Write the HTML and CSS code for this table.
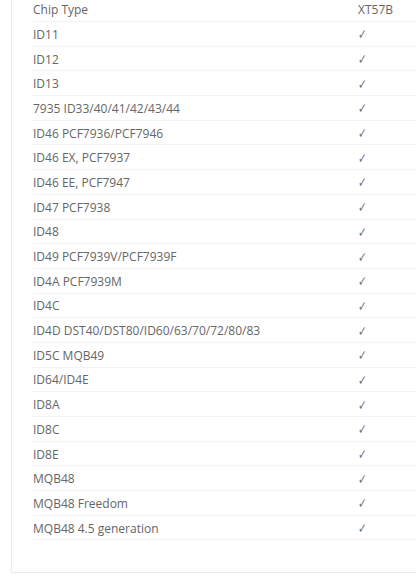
FILE: index.html
```html
<!DOCTYPE html>
<html lang="en">
<head>
    <meta charset="UTF-8">
    <meta name="viewport" content="width=device-width, initial-scale=1.0">
    <title>Chip Type Support</title>
    <link rel="stylesheet" href="styles.css">
</head>
<body>
    <div class="chip-card">
        <div class="chip-table">
            <div class="chip-row chip-head"><span>Chip Type</span><span>XT57B</span></div>
            <div class="chip-row"><span>ID11</span><span class="tick">✓</span></div>
            <div class="chip-row"><span>ID12</span><span class="tick">✓</span></div>
            <div class="chip-row"><span>ID13</span><span class="tick">✓</span></div>
            <div class="chip-row"><span>7935 ID33/40/41/42/43/44</span><span class="tick">✓</span></div>
            <div class="chip-row"><span>ID46 PCF7936/PCF7946</span><span class="tick">✓</span></div>
            <div class="chip-row"><span>ID46 EX, PCF7937</span><span class="tick">✓</span></div>
            <div class="chip-row"><span>ID46 EE, PCF7947</span><span class="tick">✓</span></div>
            <div class="chip-row"><span>ID47 PCF7938</span><span class="tick">✓</span></div>
            <div class="chip-row"><span>ID48</span><span class="tick">✓</span></div>
            <div class="chip-row"><span>ID49 PCF7939V/PCF7939F</span><span class="tick">✓</span></div>
            <div class="chip-row"><span>ID4A PCF7939M</span><span class="tick">✓</span></div>
            <div class="chip-row"><span>ID4C</span><span class="tick">✓</span></div>
            <div class="chip-row"><span>ID4D DST40/DST80/ID60/63/70/72/80/83</span><span class="tick">✓</span></div>
            <div class="chip-row"><span>ID5C MQB49</span><span class="tick">✓</span></div>
            <div class="chip-row"><span>ID64/ID4E</span><span class="tick">✓</span></div>
            <div class="chip-row"><span>ID8A</span><span class="tick">✓</span></div>
            <div class="chip-row"><span>ID8C</span><span class="tick">✓</span></div>
            <div class="chip-row"><span>ID8E</span><span class="tick">✓</span></div>
            <div class="chip-row"><span>MQB48</span><span class="tick">✓</span></div>
            <div class="chip-row"><span>MQB48 Freedom</span><span class="tick">✓</span></div>
            <div class="chip-row"><span>MQB48 4.5 generation</span><span class="tick">✓</span></div>
        </div>
    </div>
</body>
</html>
```

FILE: styles.css
```css
body {
    margin: 0;
    background: #fff;
    font-family: "Open Sans", "Liberation Sans", sans-serif;
    font-size: 12px;
    color: #666;
    overflow: hidden;
}
.chip-card {
    margin: -3px 0 0 11px;
    border-left: 1px solid #ebebeb;
    border-bottom: 1px solid #ebebeb;
    padding: 0 0 32px 21px;
}
.chip-row {
    display: grid;
    grid-template-columns: 325px 1fr;
    align-items: center;
    height: 24.7px;
    padding-top: 1px;
    box-sizing: border-box;
    border-bottom: 1px solid #f3f3f3;
    white-space: nowrap;
}
.chip-head {
    height: 25px;
}
.tick {
    justify-self: start;
    display: inline-block;
    font-family: "DejaVu Sans", sans-serif;
    font-size: 14px;
    line-height: 1;
    color: #777;
    transform: scaleX(0.75);
    transform-origin: left center;
}
```
